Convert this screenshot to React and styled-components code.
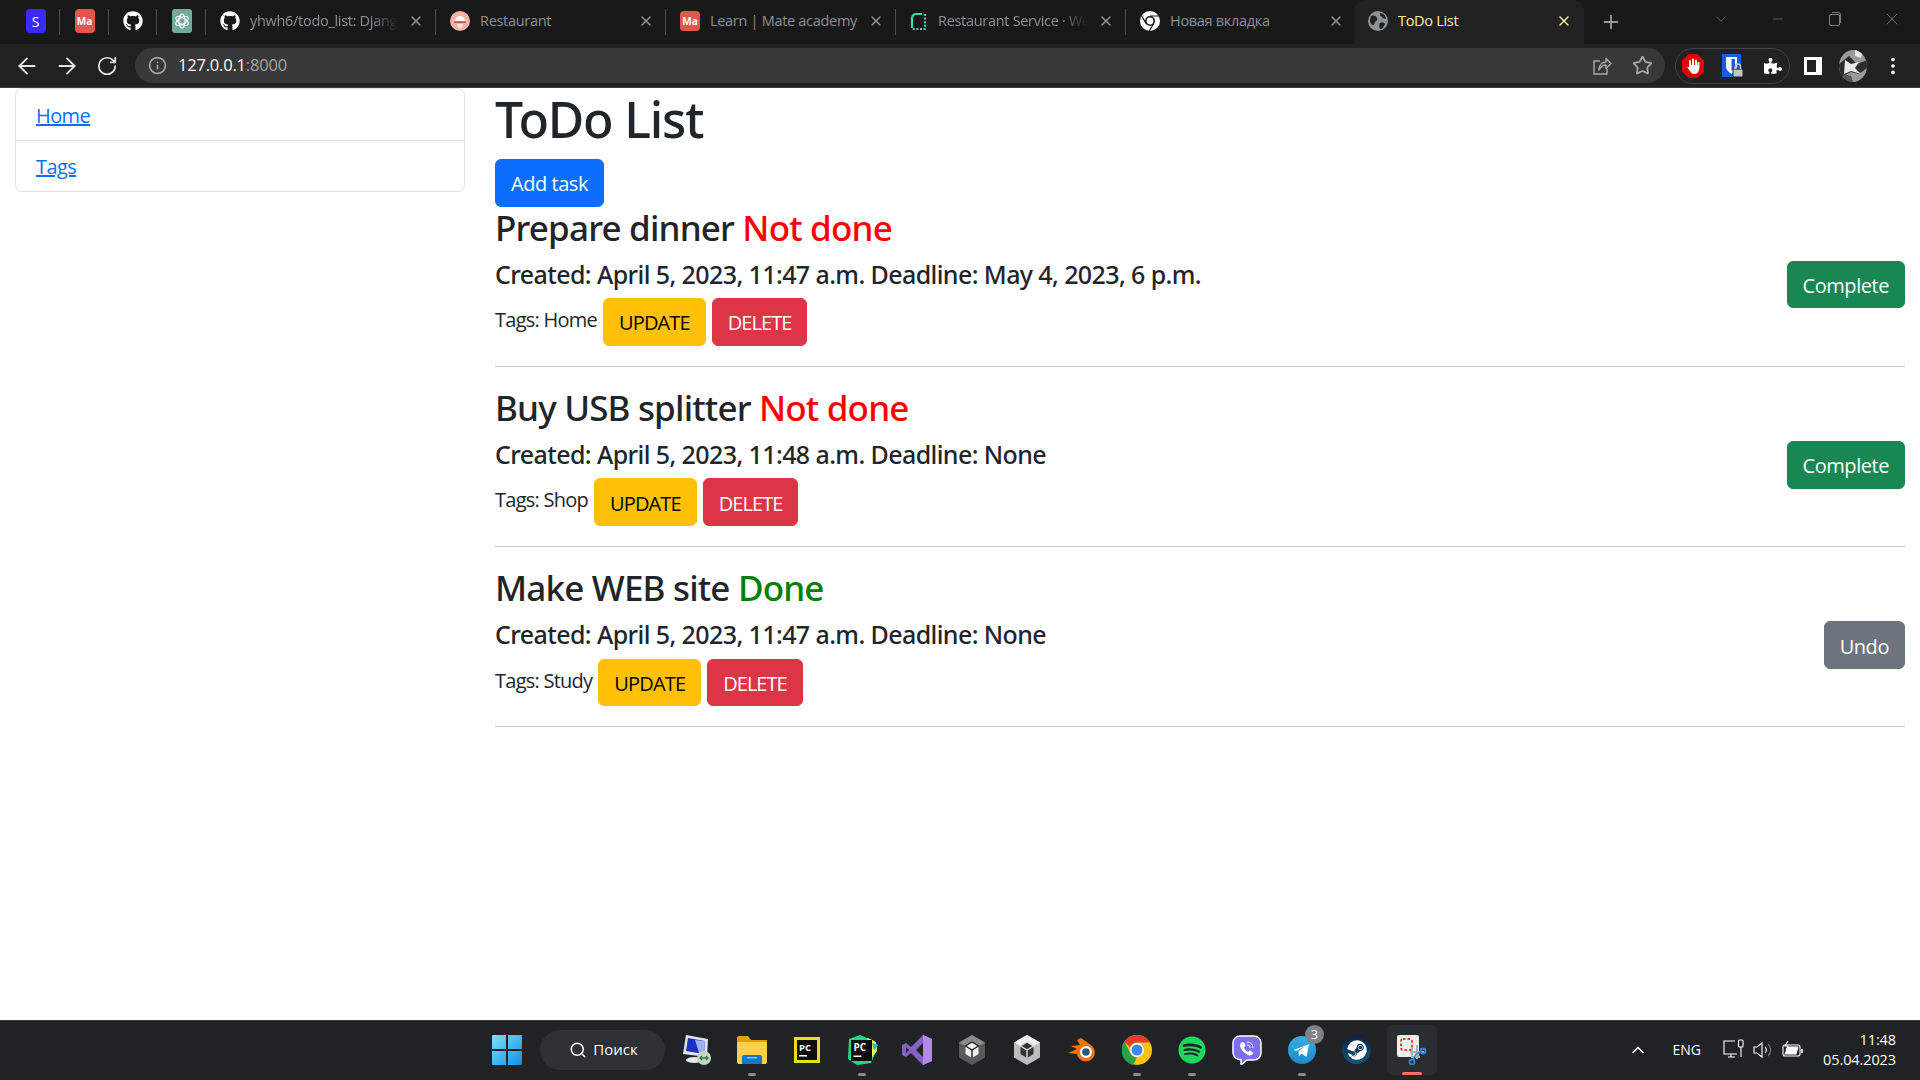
import React from "react";
import styled, { createGlobalStyle } from "styled-components";
import { ArrowLeft, ArrowRight, RotateCw, Info, Star, X, Plus, ChevronDown, ChevronUp, Minus, Search, EllipsisVertical } from "lucide-react";
import { FaGithub, FaPuzzlePiece, FaSteam, FaSpotify } from "react-icons/fa";

const uiFont = `"Open Sans", "Noto Sans", "Liberation Sans", sans-serif`;
const headingFont = `"Noto Sans", "Open Sans", "Liberation Sans", sans-serif`;

const GlobalStyle = createGlobalStyle`
  html, body { margin: 0; padding: 0; height: 100%; overflow: hidden; background: #fff; }
  * { box-sizing: border-box; }
  body { font-family: ${uiFont}; color: #212529; font-size: 20px; line-height: 1.5; }
`;

const Screen = styled.div`
  height: 100vh;
  display: flex;
  flex-direction: column;
`;

/* browser chrome */
const TabStrip = styled.div`
  height: 44px;
  flex: none;
  background: #181818;
  display: flex;
  padding-left: 11px;
`;

const PinnedTab = styled.div`
  width: ${(p) => p.$width || 49}px;
  height: 44px;
  padding-bottom: 2px;
  flex: none;
  display: flex;
  align-items: center;
  justify-content: center;
  color: #fff;
  position: relative;
  &::after {
    content: "";
    position: absolute;
    right: 0;
    top: 9px;
    height: 26px;
    width: 1px;
    background: #4c4c4c;
  }
`;

const Tab = styled.div`
  width: ${(p) => (p.$plain && !p.$active ? 228 : 230)}px;
  height: 44px;
  flex: none;
  display: flex;
  align-items: center;
  padding: 0 ${(p) => (p.$plain && !p.$active ? 10 : 12)}px 2px 14px;
  gap: 10px;
  position: relative;
  color: #fff;
  background: ${(p) => (p.$active ? "#212121" : "transparent")};
  border-radius: ${(p) => (p.$active ? "11px 11px 0 0" : "0")};
  svg { flex: none; }
  &::after {
    content: "";
    display: ${(p) => (p.$plain ? "none" : "block")};
    position: absolute;
    right: 0;
    top: 9px;
    height: 26px;
    width: 1px;
    background: #4c4c4c;
  }
`;

const TabTitle = styled.span`
  flex: 1;
  min-width: 0;
  white-space: nowrap;
  overflow: hidden;
  font-size: 14.5px;
  letter-spacing: -0.3px;
  line-height: 20px;
  color: ${(p) => (p.$active ? "#fff3a3" : "#8b9095")};
  ${(p) => p.$fade && "mask-image: linear-gradient(90deg, #000 82%, transparent 100%);"}
`;

const TabClose = styled(X)`
  color: ${(p) => (p.$active ? "#fff3a3" : "#94989c")};
`;

const NewTab = styled(Plus)`
  color: #9a9a9a;
  margin-left: 16px;
  align-self: center;
  flex: none;
`;

const WindowControls = styled.div`
  margin-left: auto;
  display: flex;
  align-items: flex-start;
  color: #7c7c7c;
`;

const WindowButton = styled.div`
  width: 57px;
  height: 38px;
  display: flex;
  align-items: center;
  justify-content: center;
`;

const Toolbar = styled.div`
  height: 44px;
  flex: none;
  background: #212121;
  border-bottom: 1px solid #3d3d3d;
  display: flex;
  align-items: center;
  padding: 0 0 0 7px;
  color: #e4e4e4;
`;

const NavButton = styled.div`
  width: 40px;
  height: 40px;
  flex: none;
  display: flex;
  align-items: center;
  justify-content: center;
`;

const Omnibox = styled.div`
  width: 1530px;
  height: 35px;
  margin-left: 8px;
  flex: none;
  border-radius: 18px;
  background: #383838;
  display: flex;
  align-items: center;
  padding: 0 12px 0 13px;
  color: #a8a8a8;
`;

const Url = styled.span`
  margin-left: 11px;
  font-size: 16.5px;
  letter-spacing: -0.2px;
  color: #fff;
  flex: 1;
  span { color: #a6a6a6; }
`;

const OmniIcons = styled.div`
  display: flex;
  align-items: center;
  gap: 20px;
`;

const ExtensionPill = styled.div`
  margin-left: 10px;
  width: 115px;
  height: 36px;
  flex: none;
  border: 1px solid #424242;
  border-radius: 18px;
  display: flex;
  align-items: center;
  justify-content: center;
`;

const ToolbarEnd = styled.div`
  display: flex;
  align-items: center;
  margin-left: 3px;
`;

/* page */
const Page = styled.div`
  flex: 1;
  min-height: 0;
  background: #fff;
  padding: 0 15px;
  display: flex;
  gap: 30px;
  overflow: hidden;
`;

const SideList = styled.ul`
  width: 450px;
  height: 104px;
  flex: none;
  margin: 0;
  padding: 0;
  list-style: none;
  border: 1px solid #dfe0e1;
  border-radius: 7.5px;
`;

const SideItem = styled.li`
  height: 51px;
  padding: 12px 20px 0;
  & + & { border-top: 1px solid #dfe0e1; height: 52px; padding-top: 11px; }
  a { color: #0d6efd; text-decoration: underline; letter-spacing: -0.6px; }
`;

const Main = styled.main`
  flex: 1;
  min-width: 0;
`;

const Title = styled.h1`
  margin: 0 0 9px;
  font-family: ${headingFont};
  font-size: 50px;
  font-weight: 500;
  line-height: 62px;
  letter-spacing: -1.2px;
`;

const Button = styled.button`
  border: 1px solid ${(p) => p.$bg};
  background: ${(p) => p.$bg};
  color: ${(p) => p.$fg || "#fff"};
  font-family: inherit;
  font-size: 20px;
  line-height: 30px;
  padding: 9px 15px 6px;
  height: 47.5px;
  border-radius: 6px;
  letter-spacing: ${(p) => p.$spacing || "-0.45px"};
  white-space: nowrap;
  flex: none;
  display: block;
`;

const SideAction = styled(Button)`
  margin-bottom: 3px;
`;

const TaskRow = styled.div`
  display: flex;
  align-items: center;
  justify-content: space-between;
`;

const TaskInfo = styled.div`
  padding-bottom: 20px;
  flex: 1;
  min-width: 0;
`;

const TaskName = styled.h3`
  margin: 0 0 10px;
  font-family: ${headingFont};
  font-size: 35px;
  font-weight: 500;
  line-height: 42px;
  letter-spacing: -0.82px;
`;

const Status = styled.span`
  color: ${(p) => (p.$done ? "#008000" : "#ff0000")};
`;

const TaskDates = styled.h5`
  margin: 0 0 9.5px;
  font-family: ${headingFont};
  font-size: 25px;
  font-weight: 500;
  line-height: 30px;
  letter-spacing: -0.6px;
`;

const TagLine = styled.div`
  display: flex;
  align-items: flex-start;
  gap: 6px;
`;

const Tags = styled.span`
  padding-top: 7px;
  line-height: 30px;
  letter-spacing: -0.75px;
`;

const Divider = styled.hr`
  margin: 0 0 20px;
  border: 0;
  height: 1.25px;
  background: #c8c9ca;
`;

/* taskbar */
const Taskbar = styled.footer`
  height: 60px;
  flex: none;
  background: #202226;
  border-top: 1px solid #3a3b3f;
  display: flex;
  align-items: center;
  padding: 0 0 2px 479px;
  color: #fff;
`;

const StartButton = styled.div`
  width: 55px;
  flex: none;
  display: flex;
  justify-content: center;
  margin-right: 6px;
`;

const SearchPill = styled.div`
  width: 125px;
  height: 40px;
  flex: none;
  margin-right: 4px;
  border-radius: 20px;
  background: #2e3033;
  display: flex;
  align-items: center;
  justify-content: center;
  gap: 6px;
  padding-left: 2px;
  font-size: 15px;
`;

const TaskSlot = styled.div`
  width: 55px;
  height: 50px;
  flex: none;
  position: relative;
  display: flex;
  align-items: center;
  justify-content: center;
  border-radius: 6px;
  ${(p) => p.$active && "background: #2b2d31; width: 50px; margin: 0 2.5px;"}
  ${(p) =>
    p.$running &&
    `&::after {
      content: "";
      position: absolute;
      bottom: ${p.$active ? "0" : "-1px"};
      left: 50%;
      transform: translateX(-50%);
      width: ${p.$active ? 20 : 8}px;
      height: 3px;
      border-radius: 2px;
      background: ${p.$active ? "#f0715f" : "#8a8b8d"};
    }`}
`;

const SteamDisc = styled.span`
  width: 29px;
  height: 29px;
  border-radius: 50%;
  background: linear-gradient(#111d3c, #11577f);
  display: flex;
  align-items: center;
  justify-content: center;
  color: #fff;
`;

const Badge = styled.span`
  position: absolute;
  top: 0;
  right: 5px;
  width: 19px;
  height: 19px;
  border-radius: 50%;
  background: #7f8184;
  font-size: 13px;
  line-height: 19px;
  text-align: center;
`;

const Tray = styled.div`
  margin-left: auto;
  display: flex;
  align-items: center;
  padding-right: 24px;
`;

const Lang = styled.span`
  font-size: 14px;
  margin: 0 22px 0 25px;
`;

const TrayIcons = styled.div`
  display: flex;
  align-items: center;
  gap: 9px;
  margin-right: 20px;
`;

const Clock = styled.div`
  text-align: right;
  font-size: 14.5px;
  line-height: 20px;
  letter-spacing: -0.1px;
`;

const SquareFav = styled.span`
  width: 20px;
  height: ${(p) => p.$height || 24}px;
  border-radius: 4px;
  background: ${(p) => p.$bg};
  color: #fff;
  font-size: ${(p) => p.$size || 10}px;
  font-weight: ${(p) => p.$weight || 700};
  display: flex;
  flex: none;
  align-items: center;
  justify-content: center;
`;

/* drawings */
const GptFav = () => (
  <svg width="20" height="24" viewBox="0 0 20 24">
    <rect width="20" height="24" rx="3" fill="#74aa9c" />
    <g fill="none" stroke="#fff" strokeWidth="1.1">
      <ellipse cx="10" cy="12" rx="3.2" ry="7" />
      <ellipse cx="10" cy="12" rx="3.2" ry="7" transform="rotate(60 10 12)" />
      <ellipse cx="10" cy="12" rx="3.2" ry="7" transform="rotate(120 10 12)" />
    </g>
  </svg>
);

const RestaurantFav = () => (
  <svg width="20" height="20" viewBox="0 0 20 20">
    <circle cx="10" cy="10" r="10" fill="#f4b4a4" />
    <path d="M5 10a5 5 0 0 1 10 0z" fill="#fff" />
    <rect x="4" y="10.500" width="12" height="1.200" fill="#a33" />
    <path d="M7 13h6l-1 4H8z" fill="#fbe5de" />
  </svg>
);

const RenderFav = () => (
  <svg width="18" height="18" viewBox="0 0 18 18">
    <path d="M2 16V6a4 4 0 0 1 4-4h6" fill="none" stroke="#3fd6ae" strokeWidth="2.2" />
    <path d="M15 2v15H2" fill="none" stroke="#3fd6ae" strokeWidth="2.2" strokeDasharray="2 1.6" />
  </svg>
);

const ChromeMono = () => (
  <svg width="20" height="20" viewBox="0 0 20 20">
    <circle cx="10" cy="10" r="10" fill="#fff" />
    <circle cx="10" cy="10" r="5" fill="#181818" />
    <circle cx="10" cy="10" r="3.4" fill="#fff" />
    <path d="M10 5h9M6 12.5 1.8 5M13.5 13l-4.2 7" stroke="#181818" strokeWidth="1.2" />
  </svg>
);

const GlobeFav = () => (
  <svg width="20" height="20" viewBox="0 0 20 20">
    <circle cx="10" cy="10" r="10" fill="#8e9297" />
    <path d="M3 5c3-1 5 0 6 2s-1 3-2 4 0 3-2 3-3-3-3-5zM12 2c3 0 6 3 6 6-2 0-3-1-4-2s-3-2-2-4zM12 12c2-1 5 0 5 1-1 3-3 5-5 5-1-2-1-4 0-6z" fill="#212121" />
  </svg>
);

const ShareIcon = () => (
  <svg width="20" height="20" viewBox="0 0 20 20" fill="none" stroke="#a8a8a8" strokeWidth="1.4">
    <path d="M8 5H2v13h13v-5" />
    <path d="M7 14c0-5 3-8 7-8V2.5l5 5-5 5V9c-3 0-5 1.500-7 5z" strokeLinejoin="round" />
  </svg>
);

const Bitwarden = () => (
  <svg width="22" height="26" viewBox="0 0 22 26">
    <rect x="0" y="1" width="19" height="23" fill="#175ddc" />
    <path d="M4 4h11v9c0 4-3 6-5.500 8C7 19 4 17 4 13z" fill="#fff" />
    <path d="M9.500 6H13v7c0 2-2 4-3.500 5z" fill="#175ddc" />
    <rect x="11" y="16" width="10" height="8" rx="1.500" fill="#c4c4c4" stroke="#212121" />
    <path d="M13.500 16v-2.500a2.500 2.500 0 0 1 5 0V16" fill="none" stroke="#c4c4c4" strokeWidth="1.500" />
  </svg>
);

const AdBlock = () => (
  <svg width="22" height="24" viewBox="0 0 22 24">
    <path d="M6.500 0h9L22 6.500v11L15.500 24h-9L0 17.500v-11z" fill="#e00000" />
    <g stroke="#fff" strokeWidth="2" strokeLinecap="round">
      <path d="M8 7v6M11 5.500V13M14 6.500V13M16.500 9v5" />
    </g>
    <path d="M7 11h10v4c0 3-2 5-5 5-2 0-3-1-4-3l-3-4 2 0z" fill="#fff" />
  </svg>
);

const SidePanel = () => (
  <svg width="18" height="18" viewBox="0 0 18 18">
    <rect width="18" height="18" fill="#fff" />
    <rect x="3" y="3" width="9" height="12" fill="#212121" />
  </svg>
);

const Avatar = () => (
  <svg width="28" height="32" viewBox="0 0 28 32">
    <defs>
      <clipPath id="avatar-clip">
        <ellipse cx="14" cy="16" rx="14" ry="16" />
      </clipPath>
    </defs>
    <g clipPath="url(#avatar-clip)">
      <rect width="28" height="32" fill="#9a9a9a" />
      <path d="M0 14 10 6l8 8 10-4v8l-8 6-8-2-12 6z" fill="#2d2d2d" />
      <path d="M6 10l6 4 8-2-4 6 6 6-10-3-7 3zM16 0h8l-2 8-6-2z" fill="#e8e8e8" />
      <path d="M4 24l8 2 2 6H4z" fill="#555" />
    </g>
  </svg>
);

const WinLogo = () => (
  <svg width="30" height="30" viewBox="0 0 30 30">
    <defs>
      <linearGradient id="win-grad" x1="0" y1="0" x2="1" y2="1">
        <stop offset="0" stopColor="#7fe0fb" />
        <stop offset="1" stopColor="#0d8fec" />
      </linearGradient>
    </defs>
    <path d="M1 0h13v14H0V1a1 1 0 0 1 1-1zM16 0h13a1 1 0 0 1 1 1v13H16zM0 16h14v14H1a1 1 0 0 1-1-1zM16 16h14v13a1 1 0 0 1-1 1H16z" fill="url(#win-grad)" />
  </svg>
);

const RdpIcon = () => (
  <svg width="30" height="32" viewBox="0 0 30 32">
    <path d="M4 1l22 4-1 18-24-3z" fill="#dfe3ea" />
    <path d="M6 4l17 3-1 13-18-3z" fill="#1c2fc4" />
    <path d="M13 6l10 1-1 13-5-1z" fill="#9db2ee" />
    <ellipse cx="12" cy="26" rx="8" ry="3" fill="#e8e8e8" />
    <circle cx="22" cy="24" r="7" fill="#c9d3cb" />
    <path d="M18.500 24h7M20 22l-2 2 2 2M24 22l2 2-2 2" stroke="#178a3f" strokeWidth="1.300" fill="none" />
  </svg>
);

const FolderIcon = () => (
  <svg width="30" height="28" viewBox="0 0 30 28">
    <path d="M0 2a2 2 0 0 1 2-2h9l3 4h16v22H0z" fill="#e2a008" />
    <path d="M0 6h30v20a2 2 0 0 1-2 2H2a2 2 0 0 1-2-2z" fill="#fbd04f" />
    <path d="M5 28v-7a2 2 0 0 1 2-2h16a2 2 0 0 1 2 2v7z" fill="#1478c8" />
    <rect x="10" y="21" width="10" height="1.500" fill="#7fc4f0" />
  </svg>
);

const PcSquare = ({ border }) => (
  <svg width="26" height="26" viewBox="0 0 26 26">
    <rect width="26" height="26" fill={border} />
    <rect x="3" y="3" width="20" height="20" fill="#0c0c0c" />
    <text x="5" y="13.500" fill="#fff" fontSize="9.500" fontWeight="700" fontFamily="Open Sans, sans-serif">PC</text>
    <rect x="5" y="18" width="8" height="1.500" fill="#fff" />
  </svg>
);

const PyCharmIcon = () => (
  <svg width="32" height="30" viewBox="0 0 32 30">
    <path d="M3 4 14 0l14 6 3 8-6 14-14 2-9-6z" fill="#21d789" />
    <path d="M22 3l8 4 1 9-8 10-6-12z" fill="#fcf84a" />
    <path d="M26 8l6 2-4 6z" fill="#07c3f2" />
    <rect x="5" y="5" width="21" height="21" fill="#0c0c0c" />
    <text x="7.500" y="15.500" fill="#fff" fontSize="10" fontWeight="700" fontFamily="Open Sans, sans-serif">PC</text>
    <rect x="7.500" y="20.500" width="8" height="1.500" fill="#fff" />
  </svg>
);

const VsIcon = () => (
  <svg width="30" height="30" viewBox="0 0 30 30">
    <path d="M21 0l9 4v22l-9 4L9 18l-5 4-4-2V10l4-2 5 4z" fill="#8661c5" />
    <path d="M21 0l9 4v22l-9 4z" fill="#b388ed" />
    <path d="M21 8l-7 7 7 7zM4 12v6l3-3z" fill="#202226" />
  </svg>
);

const UnityIcon = ({ light }) => (
  <svg width="26" height="30" viewBox="0 0 26 30">
    <path d="M13 0l13 7.500v15L13 30 0 22.500v-15z" fill={light ? "#bdbdbd" : "#5a5a5a"} />
    <path d="M13 0l13 7.500-13 7.500L0 7.500z" fill={light ? "#f0f0f0" : "#8a8a8a"} />
    <path d="M13 7l6.500 4v8L13 23l-6.500-4v-8z" fill={light ? "#333" : "#eee"} />
    <path d="M13 7l6.500 4-6.500 4-6.500-4zM13 15v8" fill="none" stroke={light ? "#ddd" : "#222"} strokeWidth="1.400" />
  </svg>
);

const BlenderIcon = () => (
  <svg width="30" height="26" viewBox="0 0 30 26">
    <path d="M14 1l10 7a9 9 0 1 1-14 9L1 16l9-4-6-3 9-1-3-5z" fill="#ea7600" />
    <circle cx="19" cy="15" r="6" fill="#fff" />
    <circle cx="19" cy="15" r="3.800" fill="#265787" />
  </svg>
);

const ChromeIcon = () => (
  <svg width="30" height="30" viewBox="0 0 30 30">
    <circle cx="15" cy="15" r="15" fill="#fbc116" />
    <path d="M15 0a15 15 0 0 1 13 7.500H15a7.500 7.500 0 0 0-7 5L2.500 6.500A15 15 0 0 1 15 0z" fill="#e33b2e" />
    <path d="M2.500 6.500 8.500 18.500a7.500 7.500 0 0 0 6.500 4L11 30A15 15 0 0 1 2.500 6.500z" fill="#2aa24c" />
    <circle cx="15" cy="15" r="7" fill="#fff" />
    <circle cx="15" cy="15" r="5.500" fill="#3f86f4" />
  </svg>
);

const ViberIcon = () => (
  <svg width="30" height="30" viewBox="0 0 30 30">
    <path d="M8 1h14a7 7 0 0 1 7 7v10a7 7 0 0 1-7 7h-7l-6 5v-5.500A7 7 0 0 1 1 18V8a7 7 0 0 1 7-7z" fill="#7d6fee" stroke="#fff" strokeWidth="1.500" />
    <path d="M9 8c1-2 3-1 4 1s0 3-1 3c0 2 2 4 4 5 1-1 2-2 3-1s3 2 2 3-3 2-5 1c-4-2-7-5-8-9 0-1 0-2 1-3z" fill="#fff" />
    <path d="M15 7c4 0 6 3 6 6M15 10c2 0 3 1 3 3" stroke="#fff" fill="none" />
  </svg>
);

const TelegramIcon = () => (
  <svg width="28" height="28" viewBox="0 0 28 28">
    <defs>
      <linearGradient id="tg-grad" x1="0" y1="0" x2="0" y2="1">
        <stop offset="0" stopColor="#37aee2" />
        <stop offset="1" stopColor="#1c8ac6" />
      </linearGradient>
    </defs>
    <circle cx="14" cy="14" r="14" fill="url(#tg-grad)" />
    <path d="M5.500 14 21 8l-2.500 13-5-3.500-2.500 2.500-.5-4.500 7-6-9 5.500z" fill="#fff" />
  </svg>
);

const SnipIcon = () => (
  <svg width="30" height="30" viewBox="0 0 30 30">
    <rect x="0" y="0" width="22" height="22" rx="2" fill="#eeeeee" />
    <rect x="4" y="4" width="11" height="11" rx="2" fill="none" stroke="#e8452c" strokeWidth="2" strokeDasharray="2.500 2" />
    <path d="M15 12v10h8M13 17h14M20 10v14" stroke="#aab0b6" strokeWidth="2" fill="none" />
    <circle cx="26" cy="16" r="2.500" fill="none" stroke="#2b88d8" strokeWidth="1.800" />
    <circle cx="15" cy="27" r="2.500" fill="none" stroke="#2b88d8" strokeWidth="1.800" />
    <path d="M16 25l3-6 5-2" stroke="#2b88d8" strokeWidth="1.500" fill="none" />
  </svg>
);

const MonitorIcon = () => (
  <svg width="21" height="21" viewBox="0 0 21 21" fill="none" stroke="#fff" strokeWidth="1.100">
    <path d="M12 2H1v13h13M5 18h7M8 15v3" />
    <rect x="15.500" y="1" width="4.500" height="7" rx="1" />
    <path d="M18 8v10" />
  </svg>
);

const SpeakerIcon = () => (
  <svg width="20" height="20" viewBox="0 0 20 20" fill="none" stroke="#fff" strokeWidth="1.100">
    <path d="M1 7h3l5-4v14l-5-4H1z" />
    <path d="M12 7a4 4 0 0 1 0 6" />
    <path d="M15 4a8 8 0 0 1 0 12" stroke="#777" />
  </svg>
);

const BatteryIcon = () => (
  <svg width="21" height="18" viewBox="0 0 21 18" fill="none" stroke="#fff" strokeWidth="1.100">
    <rect x="1" y="4" width="17" height="11" rx="2" />
    <path d="M20 8v4" strokeWidth="1.600" />
    <path d="M3 13l3-7h10l-2 7z" fill="#fff" />
    <path d="M6 0 3 5h3L4 9" />
  </svg>
);

const tasks = [
  { name: "Prepare dinner", done: false, created: "April 5, 2023, 11:47 a.m.", deadline: "May 4, 2023, 6 p.m.", tag: "Home" },
  { name: "Buy USB splitter", done: false, created: "April 5, 2023, 11:48 a.m.", deadline: "None", tag: "Shop" },
  { name: "Make WEB site", done: true, created: "April 5, 2023, 11:47 a.m.", deadline: "None", tag: "Study" },
];

const openTabs = [
  { title: "yhwh6/todo_list: Django", icon: <FaGithub size={20} />, fade: true },
  { title: "Restaurant", icon: <RestaurantFav /> },
  { title: "Learn | Mate academy", icon: <SquareFav $bg="#e2574c" $height={20}>Ma</SquareFav> },
  { title: "Restaurant Service · Web", icon: <RenderFav />, fade: true },
  { title: "Новая вкладка", icon: <ChromeMono />, plain: true },
];

const dock = [
  { icon: <RdpIcon /> },
  { icon: <FolderIcon />, running: true },
  { icon: <PcSquare border="#e6e21a" /> },
  { icon: <PyCharmIcon />, running: true },
  { icon: <VsIcon /> },
  { icon: <UnityIcon /> },
  { icon: <UnityIcon light /> },
  { icon: <BlenderIcon /> },
  { icon: <ChromeIcon />, running: true },
  { icon: <FaSpotify size={28} color="#1ed760" />, running: true },
  { icon: <ViberIcon /> },
  { icon: <TelegramIcon />, running: true, badge: 3 },
  { icon: <SteamDisc><FaSteam size={20} /></SteamDisc> },
  { icon: <SnipIcon />, running: true, active: true },
];

function BrowserChrome() {
  return (
    <>
      <TabStrip>
        <PinnedTab><SquareFav $bg="#3b2bff" $size={14} $weight={400}>S</SquareFav></PinnedTab>
        <PinnedTab><SquareFav $bg="#e2574c">Ma</SquareFav></PinnedTab>
        <PinnedTab $width={48}><FaGithub size={20} /></PinnedTab>
        <PinnedTab><GptFav /></PinnedTab>
        {openTabs.map((t) => (
          <Tab key={t.title} $plain={t.plain}>
            {t.icon}
            <TabTitle $fade={t.fade}>{t.title}</TabTitle>
            <TabClose size={16} />
          </Tab>
        ))}
        <Tab $active $plain>
          <GlobeFav />
          <TabTitle $active>ToDo List</TabTitle>
          <TabClose size={16} $active />
        </Tab>
        <NewTab size={22} />
        <WindowControls>
          <WindowButton><ChevronDown size={18} strokeWidth={1} /></WindowButton>
          <WindowButton><Minus size={16} strokeWidth={1} /></WindowButton>
          <WindowButton>
            <svg width="12" height="14" viewBox="0 0 12 14" fill="none" stroke="currentColor">
              <rect x="0.500" y="2.500" width="10" height="11" rx="1.500" />
              <path d="M3 0.500h6.500a2 2 0 0 1 2 2V11" />
            </svg>
          </WindowButton>
          <WindowButton><X size={20} strokeWidth={1} /></WindowButton>
        </WindowControls>
      </TabStrip>
      <Toolbar>
        <NavButton><ArrowLeft size={26} strokeWidth={1.7} /></NavButton>
        <NavButton><ArrowRight size={26} strokeWidth={1.7} /></NavButton>
        <NavButton><RotateCw size={22} strokeWidth={1.9} /></NavButton>
        <Omnibox>
          <Info size={19} />
          <Url>127.0.0.1<span>:8000</span></Url>
          <OmniIcons>
            <ShareIcon />
            <Star size={21} />
          </OmniIcons>
        </Omnibox>
        <ExtensionPill>
          <NavButton><AdBlock /></NavButton>
          <NavButton><Bitwarden /></NavButton>
          <NavButton><FaPuzzlePiece size={18} color="#fff" /></NavButton>
        </ExtensionPill>
        <ToolbarEnd>
          <NavButton><SidePanel /></NavButton>
          <NavButton><Avatar /></NavButton>
          <NavButton><EllipsisVertical size={22} color="#fff" /></NavButton>
        </ToolbarEnd>
      </Toolbar>
    </>
  );
}

function TaskItem({ task }) {
  return (
    <>
      <TaskRow>
        <TaskInfo>
          <TaskName>
            {task.name} <Status $done={task.done}>{task.done ? "Done" : "Not done"}</Status>
          </TaskName>
          <TaskDates>
            Created: {task.created} Deadline: {task.deadline}
          </TaskDates>
          <TagLine>
            <Tags>Tags: {task.tag}</Tags>
            <Button $bg="#ffc107" $fg="#000" $spacing="-0.85px">UPDATE</Button>
            <Button $bg="#dc3545" $spacing="-0.95px">DELETE</Button>
          </TagLine>
        </TaskInfo>
        {task.done ? <SideAction $bg="#6c757d">Undo</SideAction> : <SideAction $bg="#198754">Complete</SideAction>}
      </TaskRow>
      <Divider />
    </>
  );
}

function WindowsTaskbar() {
  return (
    <Taskbar>
      <StartButton><WinLogo /></StartButton>
      <SearchPill>
        <Search size={18} />
        Поиск
      </SearchPill>
      {dock.map((d, i) => (
        <TaskSlot key={i} $running={d.running} $active={d.active}>
          {d.icon}
          {d.badge && <Badge>{d.badge}</Badge>}
        </TaskSlot>
      ))}
      <Tray>
        <ChevronUp size={20} />
        <Lang>ENG</Lang>
        <TrayIcons>
          <MonitorIcon />
          <SpeakerIcon />
          <BatteryIcon />
        </TrayIcons>
        <Clock>
          11:48
          <br />
          05.04.2023
        </Clock>
      </Tray>
    </Taskbar>
  );
}

export default function App() {
  return (
    <Screen>
      <GlobalStyle />
      <BrowserChrome />
      <Page>
        <SideList>
          <SideItem><a href="#home">Home</a></SideItem>
          <SideItem><a href="#tags">Tags</a></SideItem>
        </SideList>
        <Main>
          <Title>ToDo List</Title>
          <Button $bg="#0d6efd">Add task</Button>
          {tasks.map((t) => (
            <TaskItem key={t.name} task={t} />
          ))}
        </Main>
      </Page>
      <WindowsTaskbar />
    </Screen>
  );
}
